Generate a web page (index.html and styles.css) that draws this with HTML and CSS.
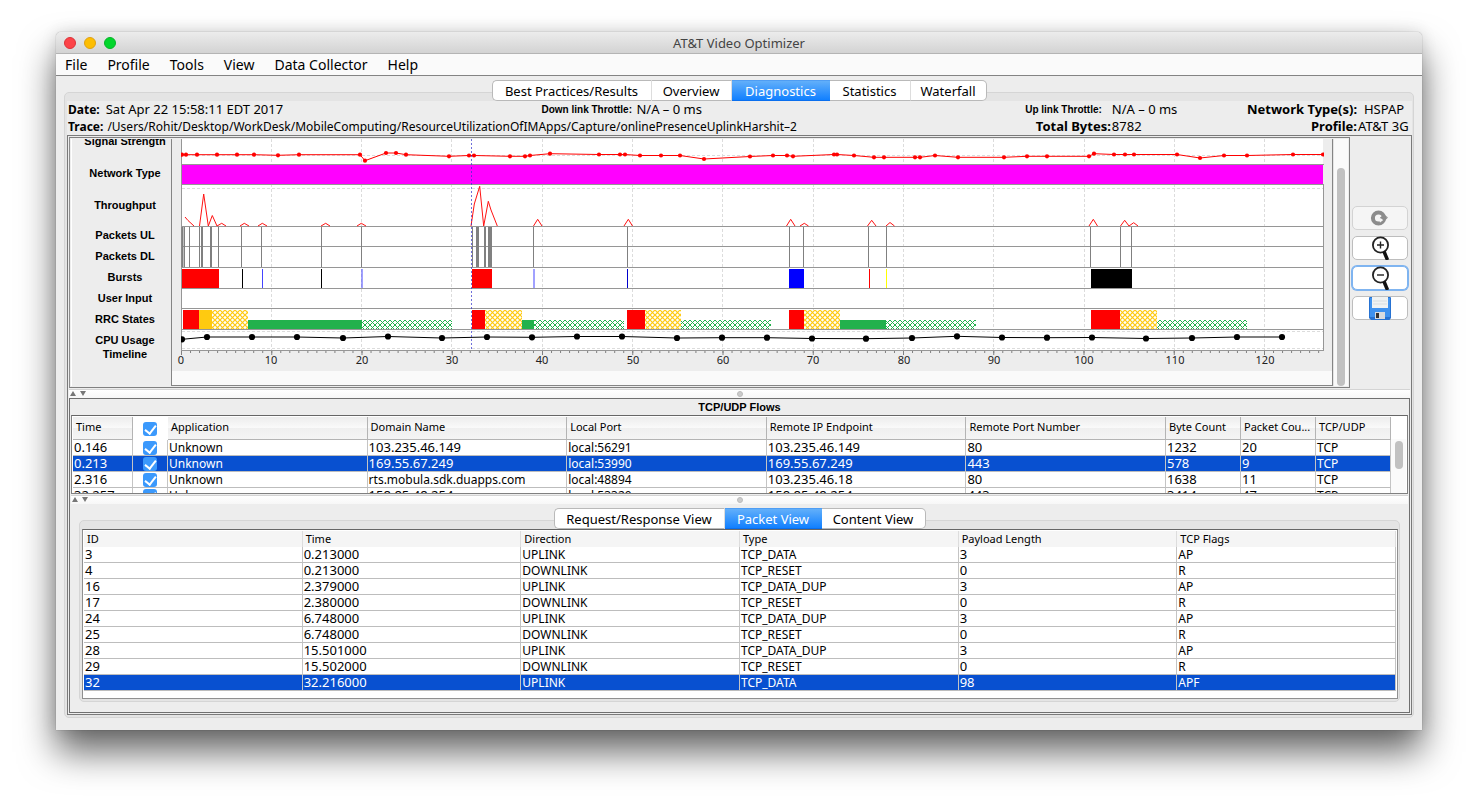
FILE: index.html
```html
<!DOCTYPE html>
<html lang="en">
<head>
<meta charset="utf-8">
<title>AT&amp;T Video Optimizer</title>
<link rel="stylesheet" href="styles.css">
</head>
<body>
<main class="window">
  <header class="titlebar">
    <div class="lights">
      <button class="light close" aria-label="Close"></button>
      <button class="light minimize" aria-label="Minimize"></button>
      <button class="light maximize" aria-label="Maximize"></button>
    </div>
    <h1 class="title">AT&amp;T Video Optimizer</h1>
  </header>
  <nav class="menubar">
    <button>File</button><button>Profile</button><button>Tools</button><button>View</button><button>Data Collector</button><button>Help</button>
  </nav>

  <div class="content">
    <div class="tabs main-tabs" role="tablist">
      <button class="tab w-best" role="tab">Best Practices/Results</button>
      <button class="tab w-over" role="tab">Overview</button>
      <button class="tab w-diag selected" role="tab" aria-selected="true">Diagnostics</button>
      <button class="tab w-stat" role="tab">Statistics</button>
      <button class="tab w-fall" role="tab">Waterfall</button>
    </div>
    <section class="tab-panel main-panel">
      <div class="info">
        <div class="date"><b>Date:</b><span class="value">Sat Apr 22 15:58:11 EDT 2017</span></div>
        <b class="narrow">Down link Throttle:</b><span class="value">N/A – 0 ms</span>
        <b class="narrow end">Up link Throttle:</b><span class="value">N/A – 0 ms</span>
        <b class="end flush">Network Type(s):</b><span class="value inset">HSPAP</span>
        <div class="trace"><b>Trace:</b><span class="path">/Users/Rohit/Desktop/WorkDesk/MobileComputing/ResourceUtilizationOfIMApps/Capture/onlinePresenceUplinkHarshit–2</span></div>
        <b class="end flush">Total Bytes:</b><span class="value">8782</span>
        <b class="end flush">Profile:</b><span class="value">AT&amp;T 3G</span>
      </div>

      <div class="split">
        <div class="upper">
          <div class="chart-pane">
            <div class="labels">
              <span class="cut">Signal Strength</span><span>Network Type</span><span class="top">Throughput</span><span>Packets UL</span><span>Packets DL</span><span>Bursts</span><span>User Input</span><span>RRC States</span><span>CPU Usage</span><span>Timeline</span>
            </div>
            <div class="chart-scroll">
              <svg class="chart" viewBox="172 139 1160 232" role="img" aria-label="Diagnostics timeline chart">
                <defs>
                  <pattern id="amber" width="5" height="5" patternUnits="userSpaceOnUse"><rect width="5" height="5" fill="#fff"/><path d="M0 0L5 5M5 0L0 5" stroke="#ffca10" stroke-width="1.2"/></pattern>
                  <pattern id="green" width="5" height="5" patternUnits="userSpaceOnUse"><rect width="5" height="5" fill="#fff"/><path d="M0 0L5 5M5 0L0 5" stroke="#22b14c" stroke-width="1"/></pattern>
                  <marker id="dot" markerUnits="userSpaceOnUse" markerWidth="6" markerHeight="6" refX="3" refY="3"><circle cx="3" cy="3" r="2.1" fill="#f00"/></marker>
                  <marker id="bead" markerUnits="userSpaceOnUse" markerWidth="8" markerHeight="8" refX="4" refY="4"><circle cx="4" cy="4" r="3.1" fill="#000"/></marker>
                  <clipPath id="plot"><rect x="181" y="139" width="1143" height="212"/></clipPath>
                </defs>
                <rect x="181" y="139" width="1142" height="212" fill="#fff"/>
                <path class="grid" d="M271.5 139V351M361.5 139V351M451.5 139V351M542.5 139V351M632.5 139V351M722.5 139V351M813.5 139V351M903.5 139V351M993.5 139V351M1084.5 139V351M1174.5 139V351M1264.5 139V351M182 155.5H1323M182 188.5H1323M182 331.5H1323M182 348.5H1323"/>
                <rect x="182" y="165" width="1141" height="19" fill="#f0f"/>
                <path class="rule" d="M181 164.5H1324M181 184.5H1324M181 226.5H1324M181 246.5H1324M181 267.5H1324M181 288.5H1324M181 308.5H1324M181 329.5H1324M181 350.5H1324M181.5 139V351M1323.5 184V351"/>
                <g clip-path="url(#plot)">
                  <polyline class="signal" points="182,154.7 186,154.7 197,154.7 217,154.7 237,154.7 254,154.7 278,155.3 299,154.7 360,154.7 365,160.7 386,153 396,153 406,154.7 449,156.3 469,155.5 474,155.5 510,156.3 525,156.3 530,155.5 550,153.7 599,154.5 620,154.5 625,154.5 640,155.5 661,155.5 680,155.5 704,159 750,156.5 773,155.5 787,155.5 793,156.3 834,154.5 837,154.5 854,155.5 874,157.3 884,157.3 915,157.3 920,157.3 935,155.5 958,157.3 1004,157.3 1027,156.3 1047,156.3 1089,156.3 1094,153.7 1114,154.5 1125,154.5 1134,154.5 1177,154.5 1200,158 1224,155.5 1247,155.5 1293,154.5 1323,154.5"/>
                  <path class="throughput" d="M185 217L188 220.500L194 226M199.500 226L203.700 194L208.300 226L212.300 215.500L217 226L221.700 223.300L226 226M240 226L244.300 223.300L249 226M258 226L262.300 223.300L267 226M321 226L325.700 223.300L330 226M357 226L361.300 223.300L366 226M471 226L474.300 204L479.700 186.300L483.700 226L488.300 201.300L491 210L497.300 226M533.500 226L537.700 219.300L542 226M624 226L628.300 219.300L632.500 226M786.500 226L790.700 219.300L795 226M800 226L804.300 223.300L808.500 226M867.500 226L871.700 220.300L876 226M886 226L890 222.500L894.500 226M1089 226L1093.300 219.300L1097.500 226M1120.500 226L1124.700 220.300L1129 226L1133.700 222.700L1138 226"/>
                </g>
                <path class="packets" d="M184.500 227V267M189.500 227V267M199.500 227V267M218.500 227V267M241.500 227V267M261.500 227V267M321.500 227V267M361.500 227V267M472.500 227V267M533.500 227V267M627.500 227V267M789.500 227V267M803.500 227V267M868.500 227V267M886.500 227V267M1090.500 227V267M1120.500 227V267M1131.500 227V267"/>
                <path class="packets wide" d="M182.500 227V267M202 227V267M211 227V267M485 227V267"/>
                <path fill="#808080" d="M476 227h3v40h-3zM488 227h4v40h-4z"/>
                <g>
                  <path fill="#f00" d="M182 269h37v19h-37zM472 269h20v19h-20zM869 269h1v19h-1z"/>
                  <path fill="#000" d="M242 269h1v19h-1zM321 269h1v19h-1zM1091 269h41v19h-41z"/>
                  <path fill="#00c" d="M627 269h1v19h-1z"/>
                  <path fill="#00f" d="M789 269h15v19h-15z"/>
                  <path fill="#44f" d="M262 269h1v19h-1zM361.500 269h1v19h-1zM533.500 269h1v19h-1z"/>
                  <path fill="#ff0" d="M886 269h1v19h-1z"/>
                </g>
                <path fill="#f00" d="M183 310h16v19h-16zM472 310h13v19h-13zM627 310h18v19h-18zM789 310h15v19h-15zM1091 310h29v19h-29z"/>
                <path fill="#ffca10" d="M199 310h13v19h-13z"/>
                <path fill="url(#amber)" d="M212 310h36v19h-36zM485 310h37v19h-37zM645 310h36v19h-36zM804 310h36v19h-36zM1120 310h37v19h-37z"/>
                <path fill="#22b14c" d="M248 320h114v9h-114zM522 320h12v9h-12zM840 320h46v9h-46z"/>
                <path fill="url(#green)" d="M362 320h90v9h-90zM534 320h90v9h-90zM681 320h90v9h-90zM886 320h90v9h-90zM1157 320h90v9h-90z"/>
                <polyline clip-path="url(#plot)" class="cpu" points="182,339.3 207,337 252,337 297,337 343,338 388,336.500 442,338 487,337 532,337.300 577,336.500 622,336.500 677,338 722,337.700 767,337.700 812,338.500 866,338.700 912,338 957,336.300 1002,337.500 1047,337.700 1092,337.500 1146,338.500 1192,338 1237,337 1282,337"/>
                <path class="cursor" d="M471.500 139V351"/>
                <path class="minor" d="M181 352H1324"/>
                <path class="major" d="M181 353H1324"/>
                <g class="axis">
                  <text x="181" y="364">0</text><text x="271" y="364">10</text><text x="362" y="364">20</text><text x="452" y="364">30</text><text x="542" y="364">40</text><text x="633" y="364">50</text><text x="723" y="364">60</text><text x="813" y="364">70</text><text x="904" y="364">80</text><text x="994" y="364">90</text><text x="1084" y="364">100</text><text x="1175" y="364">110</text><text x="1265" y="364">120</text>
                </g>
              </svg>
            </div>
            <div class="chart-bar"><div class="thumb"></div></div>
          </div>
          <aside class="tools">
            <button class="tool disabled" aria-label="Refresh" disabled>
              <svg viewBox="0 0 20 16"><circle cx="8.500" cy="8" r="5.600" fill="none" stroke="#8c8c8c" stroke-width="4"/><path d="M9.500 8.500L18 7.500L13.500 4Z" fill="#8c8c8c"/><path d="M8.500 8L10 12.500L14 9.500Z" fill="#f5f5f5"/><path d="M10 7.500H18L14.500 11Z" fill="#8c8c8c"/></svg>
            </button>
            <button class="tool" aria-label="Zoom in">
              <svg viewBox="0 0 20 24"><circle cx="10.500" cy="9" r="7.600" fill="#fff" stroke="#222" stroke-width="1.800"/><path d="M7 9H14M10.500 5.500V12.500" stroke="#222" stroke-width="1.400"/><path d="M14 15.500L17.500 24" stroke="#111" stroke-width="3.500"/></svg>
            </button>
            <button class="tool focused" aria-label="Zoom out">
              <svg viewBox="0 0 20 24"><circle cx="10.500" cy="9" r="7.600" fill="#fff" stroke="#222" stroke-width="1.800"/><path d="M7 9H14" stroke="#222" stroke-width="1.400"/><path d="M14 15.500L17.500 24" stroke="#111" stroke-width="3.500"/></svg>
            </button>
            <button class="tool" aria-label="Save">
              <svg viewBox="0 0 22 24"><path d="M1 1H21Q22 1 22 2V22L20.500 24H2L0 22V2Q0 1 1 1Z" fill="#2672d2"/><path d="M1 2H21V21H1Z" fill="#3f92ef"/><path d="M3 1H19V12H3Z" fill="#f0f2f3"/><path d="M4 5H18M4 8H18" stroke="#d8dde0"/><path d="M6 16H16V23H6Z" fill="#d9dcdf"/><path d="M7 17H10V22H7Z" fill="#333"/></svg>
            </button>
          </aside>
        </div>

        <div class="divider"><span class="arrows"><i class="up"></i><i class="down"></i></span><i class="grip"></i></div>

        <div class="lower">
          <h2 class="flows-title">TCP/UDP Flows</h2>
          <div class="flows">
            <div class="flow-view">
              <table class="flow-table">
                <colgroup><col class="c-time"><col class="c-check"><col><col><col><col><col><col class="c-small"><col class="c-small"><col class="c-small"></colgroup>
                <thead><tr><th>Time</th><th class="check"><input type="checkbox" checked aria-label="Select all flows"></th><th>Application</th><th>Domain Name</th><th>Local Port</th><th>Remote IP Endpoint</th><th>Remote Port Number</th><th>Byte Count</th><th>Packet Cou...</th><th>TCP/UDP</th></tr></thead>
                <tbody>
                  <tr><td class="num">0.146</td><td class="check"><input type="checkbox" checked aria-label="Flow 0.146"></td><td>Unknown</td><td class="num">103.235.46.149</td><td>local:56291</td><td class="num">103.235.46.149</td><td class="num">80</td><td class="num">1232</td><td class="num">20</td><td>TCP</td></tr>
                  <tr class="selected"><td class="num">0.213</td><td class="check"><input type="checkbox" checked aria-label="Flow 0.213"></td><td>Unknown</td><td class="num">169.55.67.249</td><td>local:53990</td><td class="num">169.55.67.249</td><td class="num">443</td><td class="num">578</td><td class="num">9</td><td>TCP</td></tr>
                  <tr><td class="num">2.316</td><td class="check"><input type="checkbox" checked aria-label="Flow 2.316"></td><td>Unknown</td><td>rts.mobula.sdk.duapps.com</td><td>local:48894</td><td class="num">103.235.46.18</td><td class="num">80</td><td class="num">1638</td><td class="num">11</td><td>TCP</td></tr>
                  <tr><td class="num">32.257</td><td class="check"><input type="checkbox" checked aria-label="Flow 32.257"></td><td>Unknown</td><td class="num">158.85.48.254</td><td>local:53320</td><td class="num">158.85.48.254</td><td class="num">443</td><td class="num">3414</td><td class="num">47</td><td>TCP</td></tr>
                </tbody>
              </table>
            </div>
            <div class="flow-bar"><div class="thumb"></div></div>
          </div>

          <div class="divider"><span class="arrows"><i class="up"></i><i class="down"></i></span><i class="grip"></i></div>

          <div class="packet-area">
            <div class="tabs" role="tablist">
              <button class="tab w-req" role="tab">Request/Response View</button>
              <button class="tab w-pack selected" role="tab" aria-selected="true">Packet View</button>
              <button class="tab w-cont" role="tab">Content View</button>
            </div>
            <section class="tab-panel packet-panel">
              <div class="packet-frame">
                <table class="packet-table">
                  <thead><tr><th>ID</th><th>Time</th><th>Direction</th><th>Type</th><th>Payload Length</th><th>TCP Flags</th></tr></thead>
                  <tbody>
                    <tr><td class="num">3</td><td class="num">0.213000</td><td>UPLINK</td><td>TCP_DATA</td><td class="num">3</td><td>AP</td></tr>
                    <tr><td class="num">4</td><td class="num">0.213000</td><td>DOWNLINK</td><td>TCP_RESET</td><td class="num">0</td><td>R</td></tr>
                    <tr><td class="num">16</td><td class="num">2.379000</td><td>UPLINK</td><td>TCP_DATA_DUP</td><td class="num">3</td><td>AP</td></tr>
                    <tr><td class="num">17</td><td class="num">2.380000</td><td>DOWNLINK</td><td>TCP_RESET</td><td class="num">0</td><td>R</td></tr>
                    <tr><td class="num">24</td><td class="num">6.748000</td><td>UPLINK</td><td>TCP_DATA_DUP</td><td class="num">3</td><td>AP</td></tr>
                    <tr><td class="num">25</td><td class="num">6.748000</td><td>DOWNLINK</td><td>TCP_RESET</td><td class="num">0</td><td>R</td></tr>
                    <tr><td class="num">28</td><td class="num">15.501000</td><td>UPLINK</td><td>TCP_DATA_DUP</td><td class="num">3</td><td>AP</td></tr>
                    <tr><td class="num">29</td><td class="num">15.502000</td><td>DOWNLINK</td><td>TCP_RESET</td><td class="num">0</td><td>R</td></tr>
                    <tr class="selected"><td class="num">32</td><td class="num">32.216000</td><td>UPLINK</td><td>TCP_DATA</td><td class="num">98</td><td>APF</td></tr>
                  </tbody>
                </table>
              </div>
            </section>
          </div>
        </div>
      </div>
    </section>
  </div>
</main>
</body>
</html>
```
FILE: styles.css
```css
* { box-sizing: border-box; }

body {
  margin: 0;
  padding: 32px 56px 78px;
  background: #fff;
  color: #000;
  font-family: "Noto Sans", "Open Sans", sans-serif;
  font-size: 12px;
}

button { font: inherit; color: inherit; border: 0; padding: 0; margin: 0; background: none; }
h1, h2 { margin: 0; font-weight: normal; }

.window {
  background: #ededed;
  border-radius: 5px 5px 0 0;
  box-shadow: 0 0 1px rgba(0, 0, 0, .5), 0 22px 36px rgba(0, 0, 0, .6), 0 0 16px rgba(0, 0, 0, .12);
}

/* Title bar and menu */
.titlebar {
  display: grid;
  grid-template-columns: 1fr auto 1fr;
  align-items: center;
  height: 22px;
  padding: 0 8px;
  border-bottom: 1px solid #b4b4b4;
  border-radius: 5px 5px 0 0;
  background: linear-gradient(#ececec, #d3d3d3);
}
.lights { display: flex; gap: 8px; }
.light { width: 12px; height: 12px; border-radius: 50%; border: 1px solid; }
.close { background: #fc4348; border-color: #dc3238; }
.minimize { background: #fdbe02; border-color: #e0a112; }
.maximize { background: #02d62c; border-color: #06b428; }
.title { font-size: 13px; line-height: 22px; color: #444; }

.menubar {
  display: flex;
  gap: 20px;
  height: 22px;
  padding: 0 9px;
  border-bottom: 1px solid #838383;
  background: #fafafa;
  font-size: 14px;
  line-height: 21px;
}

.content { padding: 4px 8px 12px; }

/* Tabs */
.tabs { position: relative; z-index: 1; display: flex; justify-content: center; margin-bottom: -9px; }
.tab {
  height: 21px;
  border: solid #b9b9b9;
  border-width: 1px 1px 1px 0;
  border-right-color: #ddd;
  background: #fff;
  font-size: 13px;
  line-height: 18px;
  white-space: nowrap;
}
.tab:first-child { border-left-width: 1px; border-radius: 5px 0 0 5px; }
.tab:last-child { border-right-color: #b9b9b9; border-radius: 0 5px 5px 0; }
.tab.selected { border-color: #4f9df3 #1a80f6 #0a6fee; border-right-width: 0; background: linear-gradient(#62affa, #1180ff); color: #fff; }
.w-best { width: 160px; }
.w-over { width: 80px; }
.w-diag { width: 98px; }
.w-stat { width: 81px; }
.w-fall { width: 76px; }
.w-req { width: 171px; }
.w-pack { width: 97px; }
.w-cont { width: 104px; }

.tab-panel { border: 1px solid #d5d5d5; border-radius: 5px; background: #e4e4e4; }
.main-panel { padding: 8px 1px 2px 2px; }

/* Trace summary */
.info {
  display: grid;
  grid-template-columns: 473fr 95px 384fr 91px 135fr 111px 54px;
  grid-auto-rows: 17px;
  padding: 0 0 0 1px;
  background: #ededed;
  line-height: 17px;
  white-space: nowrap;
}
.date { display: flex; gap: 6px; }
.value { font-size: 13px; }
.trace { grid-column: span 3; display: flex; gap: 4px; }
.narrow { font-family: "Liberation Sans", sans-serif; font-size: 10px; line-height: 18px; }
.end { text-align: right; padding-right: 10px; }
.end.flush { padding-right: 1px; font-size: 13px; }
.inset { padding-left: 6px; }

/* Split panes */
.split { border: 1px solid #7a7a7a; padding: 1px; background: #ededed; }
.upper { display: flex; }
.chart-pane {
  flex: 1;
  min-width: 0;
  display: flex;
  border: 1px solid #808080;
  padding: 1px;
  border-left-color: #8d8d8d;
  background: #ededed;
}
.labels {
  width: 100px;
  display: grid;
  grid-template-rows: 9px 50px 26px 21px 21px 21px 21px 21px 21px 8px;
  justify-items: center;
  align-items: center;
  align-content: start;
  height: 247px;
  overflow: hidden;
  padding-left: 7px;
  border-left: 1px solid #fff;
  font: bold 11px/14px "Liberation Sans", sans-serif;
}
.labels .cut { align-self: end; }
.labels .top { align-self: start; }
.chart-scroll {
  flex: 1;
  min-width: 0;
  border: solid #858585;
  border-width: 0 1px 1px;
  padding-bottom: 13px;
  background: linear-gradient(#fafafa, #fafafa) bottom / 100% 14px no-repeat #ededed;
}
.chart { display: block; width: 100%; height: auto; }
.chart-bar { width: 15px; padding: 29px 3px 0; display: flex; background: #fafafa; border-left: 1px solid #e4e4e4; }
.thumb { flex: 1; border-radius: 4px; background: #c1c1c1; }

.grid { fill: none; stroke: #dcdcdc; stroke-dasharray: 3 2; }
.rule { fill: none; stroke: #969696; }
.signal { fill: none; stroke: #f00; marker-start: url(#dot); marker-mid: url(#dot); marker-end: url(#dot); }
.throughput { fill: none; stroke: #f11; }
.packets { stroke: #808080; }
.wide { stroke-width: 2; }
.cpu { fill: none; stroke: #000; marker-start: url(#bead); marker-mid: url(#bead); marker-end: url(#bead); }
.cursor { stroke: #33c; stroke-width: 1; stroke-dasharray: 2 2; opacity: .7; }
.minor { stroke: #808080; stroke-width: 2; stroke-dasharray: 1 8.025; }
.major { stroke: #808080; stroke-width: 4; stroke-dasharray: 1 89.25; }
.axis { font-size: 11px; text-anchor: middle; fill: #222; }

.tools { width: 60px; display: flex; flex-direction: column; gap: 6px; padding: 69px 2px 0 2px; }
.tool {
  height: 24px;
  display: flex;
  align-items: center;
  justify-content: center;
  border: 1px solid #bdbdbd;
  border-radius: 5px;
  background: #fff;
}
.tool.disabled { border-color: #d3d3d3; background: #f5f5f5; }
.tool.focused { border-color: #7fb4f0; box-shadow: 0 0 0 1px #7fb4f0; }
.tool svg { width: 22px; height: 24px; }
.tool.disabled svg { width: 20px; height: 16px; }

.divider {
  display: grid;
  grid-template-columns: 1fr auto 1fr;
  height: 9px;
  margin-top: 1px;
  border-top: 1px solid #d4d4d4;
  background: linear-gradient(#fff, #f7f7f7);
}
.arrows { display: flex; gap: 4px; padding: 1px 0 0 1px; }
.up, .down { border: solid transparent; border-width: 0 3px; height: 5px; }
.up { border-bottom: 5px solid #777; }
.down { border-top: 5px solid #777; }
.grip { width: 6px; height: 6px; margin-top: 1px; border-radius: 50%; background: #ccc; border: 1px solid #bbb; }

.lower { border: 1px solid #707070; padding: 0 1px 10px; }
.flows-title { font: bold 11px/17px "Liberation Sans", sans-serif; text-align: center; height: 16px; }

/* Flow table */
.flows { display: flex; height: 79px; overflow: hidden; border: 1px solid #808080; border-top-color: #666; padding: 1px 1px 0; background: #fff; }
.flow-view { flex: 1; min-width: 0; }
table { width: 100%; border-collapse: separate; border-spacing: 0; table-layout: fixed; }
th, td { white-space: nowrap; text-align: left; padding: 0 0 0 1px; }
th { font-weight: normal; font-size: 11px; padding-left: 3px; }
td { height: 16px; line-height: 15px; border-right: 1px solid #c4c4c4; border-bottom: 1px solid #bdbdbd; font-size: 12px; }
.num { font-size: 13px; }
.selected td { background: #0850d0; color: #fff; }
.flow-table th { height: 23px; line-height: 17px; padding-bottom: 4px; border-right: 1px solid #b4b4b4; border-bottom: 1px solid #b4b4b4; background: linear-gradient(#ededed, #fafafa 50%, #efefef 51%, #f5f5f5); }
.c-time { width: 60px; }
.c-check { width: 35px; }
.c-small { width: 75px; }
.flow-table .check { text-align: center; line-height: 0; padding: 0; }
.flow-table th.check { background: #fff; border-bottom-color: #fff; border-right-color: #fff; padding-top: 2px; }
input[type="checkbox"] {
  appearance: none;
  width: 14px;
  height: 14px;
  margin: 0;
  display: inline-flex;
  justify-content: center;
  vertical-align: top;
  border-radius: 3px;
  background: #3b99fc;
}
input[type="checkbox"]::before {
  content: "";
  width: 5px;
  height: 9px;
  margin-top: 1px;
  border: solid #fff;
  border-width: 0 2px 2px 0;
  transform: rotate(38deg);
}
.flow-bar { width: 15px; margin-top: 22px; padding: 2px 3px 24px 4px; display: flex; background: #fafafa; }

/* Packet table */
.packet-area { padding: 4px 8px 0; }
.packet-panel { padding: 8px 1px 2px 2px; }
.packet-frame { border: 1px solid #909090; border-top-color: #666; padding: 1px 1px 7px; background: #fff; }
.packet-table th { height: 16px; line-height: 13px; padding-bottom: 2px; background: #f5f5f5; border-right: 1px solid #ddd; }
```
